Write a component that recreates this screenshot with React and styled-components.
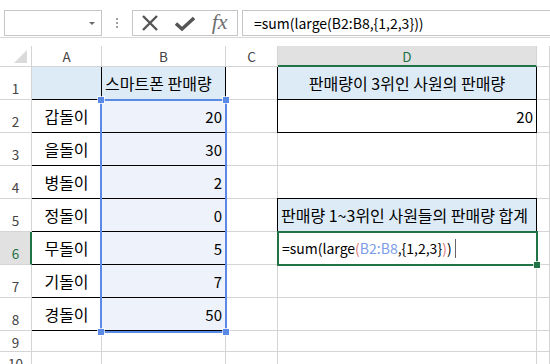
import React from 'react';
import styled, { createGlobalStyle } from 'styled-components';

const Global = createGlobalStyle`
  html, body { margin: 0; padding: 0; background: #fff; }
  body {
    width: 550px; height: 364px; overflow: hidden;
    font-family: "Noto Sans CJK KR", "Noto Sans", sans-serif;
  }
`;

const GRID = '#d4d4d4';
const GREEN = '#217346';
const BLUE = '#5b8ae6';

const Toolbar = styled.div`
  box-sizing: border-box;
  height: 38px;
  padding: 10px 0 0 4px;
  border-bottom: 1px solid #d8d8d8;
  display: flex;
  align-items: flex-start;
`;

const NameBox = styled.div`
  box-sizing: border-box;
  width: 98px; height: 26px;
  border: 1px solid #c6c6c6;
  display: flex; align-items: center; justify-content: flex-end;
  padding-right: 6px;
`;

const DropArrow = styled.span`
  width: 0; height: 0;
  border-left: 3px solid transparent;
  border-right: 3px solid transparent;
  border-top: 3px solid #6a6a6a;
`;

const Grip = styled.div`
  width: 30px; height: 26px;
  display: flex; flex-direction: column; align-items: center; justify-content: center;
  gap: 2px;
`;

const GripDot = styled.span`
  width: 2px; height: 2px; background: #a0a0a0;
`;

const FxBox = styled.div`
  box-sizing: border-box;
  width: 106px; height: 26px;
  border: 1px solid #c6c6c6;
  display: grid; grid-template-columns: repeat(3, 1fr);
  align-items: center; justify-items: center;
`;

const FxText = styled.span`
  font-family: "Liberation Serif", "DejaVu Serif", serif;
  font-style: italic;
  font-size: 22px;
  color: #707070;
  line-height: 1;
  margin-top: -2px;
`;

const FormulaBar = styled.div`
  box-sizing: border-box;
  flex: 1;
  margin-left: 4px;
  height: 26px;
  border: 1px solid #c6c6c6;
  border-right: none;
  display: flex; align-items: center;
  padding-left: 11px;
  font-size: 14px;
  color: #000;
  white-space: nowrap;
`;

const Spacer = styled.div`
  height: 8px;
`;

const Sheet = styled.div`
  position: relative;
`;

const Grid = styled.div`
  display: grid;
  grid-template-columns: 32px 70px 124px 52px 259px 1fr;
  grid-template-rows: 21px repeat(8, 33px) 21px 21px;
`;

const ColHead = styled.div`
  box-sizing: border-box;
  border-right: 1px solid ${GRID};
  border-bottom: ${p => (p.$sel ? `2px solid ${GREEN}` : `1px solid ${GRID}`)};
  background: ${p => (p.$sel ? '#e1e1e1' : '#fff')};
  color: ${p => (p.$sel ? GREEN : '#444')};
  font-size: 13.5px;
  display: flex; align-items: center; justify-content: center;
`;

const Corner = styled.div`
  box-sizing: border-box;
  border-right: 1px solid ${GRID};
  border-bottom: 1px solid ${GRID};
  display: flex; align-items: flex-end; justify-content: flex-end;
  padding: 0 4px 3px 0;
`;

const CornerTri = styled.span`
  width: 0; height: 0;
  border-left: 13px solid transparent;
  border-bottom: 13px solid #dadada;
`;

const RowHead = styled.div`
  box-sizing: border-box;
  border-right: ${p => (p.$sel ? `2px solid ${GREEN}` : `1px solid ${GRID}`)};
  border-bottom: 1px solid ${GRID};
  background: ${p => (p.$sel ? '#e1e1e1' : '#fff')};
  color: ${p => (p.$sel ? GREEN : '#444')};
  font-size: 13.5px;
  display: flex; align-items: flex-end; justify-content: center;
  padding-bottom: ${p => (p.$short ? '0' : '2px')};
  padding-left: ${p => (p.$sel ? '1px' : '0')};
  line-height: 18px;
`;

const justify = { left: 'flex-start', center: 'center', right: 'flex-end' };

const Cell = styled.div`
  box-sizing: border-box;
  border-right: 1px solid ${p => (p.$b ? '#000' : GRID)};
  border-bottom: 1px solid ${p => (p.$b ? '#000' : GRID)};
  background: ${p => p.$fill || '#fff'};
  box-shadow: ${p => p.$shadow || 'none'};
  display: flex; align-items: center;
  justify-content: ${p => justify[p.$align || 'left']};
  padding: 0 3px 0 ${p => p.$pl || 3}px;
  font-size: ${p => p.$size || 16}px;
  color: #000;
  white-space: nowrap;
  min-width: 0;
`;

const RangeBox = styled.div`
  position: absolute;
  box-sizing: border-box;
  left: 100px; top: 53px; width: 127px; height: 234px;
  border: 2px solid ${BLUE};
  pointer-events: none;
`;

const Handle = styled.span`
  position: absolute;
  width: 6px; height: 6px;
  background: ${p => p.$color};
  box-shadow: 0 0 0 1px rgba(255,255,255,0.7);
  ${p => (p.$top ? 'top: -4px;' : 'bottom: -4px;')}
  ${p => (p.$left ? 'left: -4px;' : 'right: -4px;')}
`;

const ActiveBox = styled.div`
  position: absolute;
  box-sizing: border-box;
  left: 277px; top: 185px; width: 261px; height: 35px;
  border: 2px solid ${GREEN};
  pointer-events: none;
`;

const Tok = styled.span`
  color: ${p => p.$c || '#000'};
`;

const Caret = styled.span`
  display: inline-block;
  width: 1px; height: 19px;
  background: #666;
  margin-left: 3px;
`;

const FILL = '#ddebf7';
const TINT = '#edf2fb';

const names = ['갑돌이', '을돌이', '병돌이', '정돌이', '무돌이', '기돌이', '경돌이'];
const sales = ['20', '30', '2', '0', '5', '7', '50'];

function shadowFor(b, col, row) {
  if (!b) return 'none';
  const s = [];
  if (col !== 'A') s.push('-1px 0 0 #000');
  if (row !== 1) s.push('0 -1px 0 #000');
  if (col !== 'A' && row !== 1) s.push('-1px -1px 0 #000');
  return s.length ? s.join(', ') : 'none';
}

function buildRow(r) {
  const cells = { A: {}, B: {}, C: {}, D: {}, E: {} };
  if (r === 1) {
    cells.A = { b: true, fill: FILL };
    cells.B = { b: true, fill: FILL, text: '스마트폰 판매량', align: 'left' };
    cells.D = { b: true, fill: FILL, text: '판매량이 3위인 사원의 판매량', align: 'center' };
  } else if (r >= 2 && r <= 8) {
    cells.A = { b: true, text: names[r - 2], align: 'center' };
    cells.B = { b: true, fill: TINT, text: sales[r - 2], align: 'right', size: 15 };
  }
  if (r === 2) cells.D = { b: true, text: '20', align: 'right', size: 15 };
  if (r === 5) cells.D = { b: true, fill: FILL, text: '판매량 1~3위인 사원들의 판매량 합계', align: 'left', pl: 3 };
  if (r === 6) cells.D = { formula: true, pl: 4, size: 14 };
  return cells;
}

const Formula = () => (
  <>
    <Tok>=sum(large</Tok>
    <Tok $c="#e07a7a">(</Tok>
    <Tok $c="#7b9de8">B2:B8</Tok>
    <Tok>,{'{'}1,2,3{'}'}</Tok>
    <Tok $c="#e07a7a">)</Tok>
    <Tok>)</Tok>
  </>
);

const XIcon = () => (
  <svg width="18" height="16" viewBox="0 0 18 16">
    <path d="M2 1 L16 15 M16 1 L2 15" stroke="#555" strokeWidth="2.4" fill="none" />
  </svg>
);

const CheckIcon = () => (
  <svg width="20" height="15" viewBox="0 0 20 15">
    <path d="M1 7.5 L7 13 L19 2" stroke="#555" strokeWidth="3.4" fill="none" strokeLinejoin="miter" />
  </svg>
);

export default function App() {
  const rows = [1, 2, 3, 4, 5, 6, 7, 8, 9, 10];
  const cols = ['A', 'B', 'C', 'D', 'E'];
  return (
    <>
      <Global />
      <Toolbar>
        <NameBox><DropArrow /></NameBox>
        <Grip><GripDot /><GripDot /><GripDot /></Grip>
        <FxBox>
          <XIcon />
          <CheckIcon />
          <FxText>fx</FxText>
        </FxBox>
        <FormulaBar>=sum(large(B2:B8,{'{'}1,2,3{'}'}))</FormulaBar>
      </Toolbar>
      <Spacer />
      <Sheet>
        <Grid>
          <Corner><CornerTri /></Corner>
          {cols.map(c => (
            <ColHead key={c} $sel={c === 'D'}>{c === 'E' ? '' : c}</ColHead>
          ))}
          {rows.map(r => {
            const data = buildRow(r);
            return (
              <React.Fragment key={r}>
                <RowHead $sel={r === 6} $short={r >= 9}>{r}</RowHead>
                {cols.map(c => {
                  const d = data[c];
                  return (
                    <Cell
                      key={c}
                      $b={d.b}
                      $fill={d.fill}
                      $align={d.align}
                      $pl={d.pl}
                      $size={d.size}
                      $shadow={shadowFor(d.b, c, r)}
                    >
                      {d.formula ? (<><Formula /><Caret /></>) : d.text}
                    </Cell>
                  );
                })}
              </React.Fragment>
            );
          })}
        </Grid>
        <RangeBox>
          <Handle $color={BLUE} $top $left />
          <Handle $color={BLUE} $top />
          <Handle $color={BLUE} $left />
          <Handle $color={BLUE} />
        </RangeBox>
        <ActiveBox>
          <Handle $color={GREEN} />
        </ActiveBox>
      </Sheet>
    </>
  );
}
